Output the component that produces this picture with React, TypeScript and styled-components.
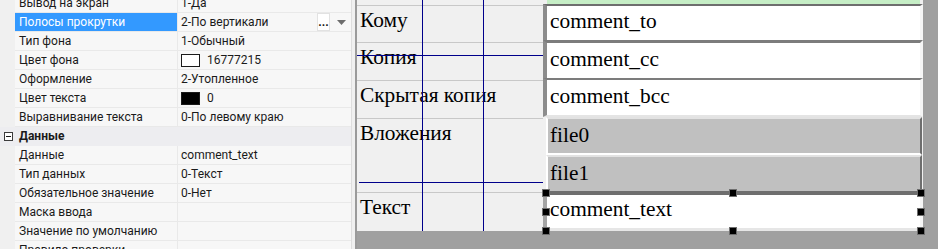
import React from "react";
import styled, { createGlobalStyle } from "styled-components";

type PropItem = {
  name: string;
  value?: string;
  swatch?: string;
  selected?: boolean;
  category?: boolean;
};

type FieldKind = "edit" | "list" | "active";

type FieldItem = {
  text: string;
  kind: FieldKind;
  top: string;
  bottom?: string;
  height: number;
  pad: number;
};

const properties: PropItem[] = [
  { name: "Вывод на экран", value: "1-Да" },
  { name: "Полосы прокрутки", value: "2-По вертикали", selected: true },
  { name: "Тип фона", value: "1-Обычный" },
  { name: "Цвет фона", value: "16777215", swatch: "#ffffff" },
  { name: "Оформление", value: "2-Утопленное" },
  { name: "Цвет текста", value: "0", swatch: "#000000" },
  { name: "Выравнивание текста", value: "0-По левому краю" },
  { name: "Данные", category: true },
  { name: "Данные", value: "comment_text" },
  { name: "Тип данных", value: "0-Текст" },
  { name: "Обязательное значение", value: "0-Нет" },
  { name: "Маска ввода" },
  { name: "Значение по умолчанию" },
  { name: "Правило проверки" },
];

const labels = ["", "Кому", "Копия", "Скрытая копия", "Вложения", "Текст"];

const fields: FieldItem[] = [
  { text: "comment_to", kind: "edit", top: "2px solid #6e6e6e", height: 36, pad: 3 },
  { text: "comment_cc", kind: "edit", top: "3px solid #7c7c7c", height: 38, pad: 4 },
  {
    text: "comment_bcc",
    kind: "edit",
    top: "2px solid #7c7c7c",
    bottom: "2px solid #e4e4e4",
    height: 39,
    pad: 4,
  },
  {
    text: "file0",
    kind: "list",
    top: "2px solid #e2e2e2",
    bottom: "2px solid #ffffff",
    height: 38,
    pad: 4,
  },
  { text: "file1", kind: "list", top: "2px solid #e2e2e2", height: 36, pad: 4 },
  {
    text: "comment_text",
    kind: "active",
    top: "4px solid #6e6e6e",
    bottom: "3px solid #e6e6e6",
    height: 40,
    pad: 2,
  },
];

const handles = [
  { x: 185, y: 189 },
  { x: 185, y: 208 },
  { x: 185, y: 227 },
  { x: 372, y: 189 },
  { x: 372, y: 227 },
  { x: 560, y: 189 },
  { x: 560, y: 208 },
  { x: 560, y: 227 },
];

export default function App() {
  return (
    <>
      <GlobalStyle />
      <Screen>
        <PropertyPane>
          <PropGrid>
            {properties.map((p, i) => (
              <PropRow key={i} $category={p.category}>
                <Gutter $category={p.category}>
                  {p.category && <CollapseBox />}
                </Gutter>
                <NameCell $selected={p.selected} $category={p.category}>
                  {p.name}
                </NameCell>
                <ValueCell $category={p.category}>
                  {p.swatch && <Swatch $color={p.swatch} />}
                  {p.value}
                  {p.selected && (
                    <EditorButtons>
                      <EllipsisButton>...</EllipsisButton>
                      <DropButton>
                        <svg width="9" height="5" viewBox="0 0 9 5">
                          <path d="M0 0h9L4.5 5z" fill="#6d6d6d" />
                        </svg>
                      </DropButton>
                    </EditorButtons>
                  )}
                </ValueCell>
              </PropRow>
            ))}
          </PropGrid>
        </PropertyPane>
        <Splitter />
        <Designer>
          <Canvas>
            <LabelColumn>
              {labels.map((l, i) => (
                <LabelCell key={i} $first={i === 0}>
                  {l}
                </LabelCell>
              ))}
            </LabelColumn>
            <FieldColumn>
              <GreenStrip />
              {fields.map((f) => (
                <Field
                  key={f.text}
                  $kind={f.kind}
                  $top={f.top}
                  $bottom={f.bottom}
                  $height={f.height}
                  $pad={f.pad}
                >
                  {f.text}
                </Field>
              ))}
            </FieldColumn>
            <GuideV $x={65} />
            <GuideV $x={126} />
            <GuideH $y={55} $from={0} />
            <GuideH $y={182} $from={2} />
            {handles.map((h, i) => (
              <Handle key={i} $x={h.x} $y={h.y} />
            ))}
          </Canvas>
        </Designer>
      </Screen>
    </>
  );
}

const GlobalStyle = createGlobalStyle`
  html, body {
    margin: 0;
    padding: 0;
    overflow: hidden;
    background: #a0a0a0;
  }
`;

const Screen = styled.div`
  display: flex;
  width: 938px;
  height: 249px;
  overflow: hidden;
`;

const PropertyPane = styled.div`
  box-sizing: border-box;
  width: 352px;
  height: 249px;
  overflow: hidden;
  background: #f7f7f7;
  border-right: 1px solid #dedede;
  font-family: Roboto, "Liberation Sans", sans-serif;
  font-size: 12px;
  color: #1a1a1a;
`;

const PropGrid = styled.div`
  margin-top: -6px;
`;

const PropRow = styled.div<{ $category?: boolean }>`
  display: grid;
  grid-template-columns: 15px 163px 1fr;
  height: 19px;
  background: ${(p) => (p.$category ? "#ededf0" : "#f7f7f7")};
`;

const Gutter = styled.div<{ $category?: boolean }>`
  display: flex;
  align-items: center;
  justify-content: center;
  background: ${(p) => (p.$category ? "#ededf0" : "#f0f0f0")};
`;

const CollapseBox = styled.div`
  position: relative;
  box-sizing: border-box;
  width: 9px;
  height: 9px;
  margin-left: 2px;
  border: 1px solid #3c3c3c;
  background: #fff;

  &::after {
    content: "";
    position: absolute;
    left: 1px;
    right: 1px;
    top: 3px;
    height: 1px;
    background: #1a1a1a;
  }
`;

const NameCell = styled.div<{ $selected?: boolean; $category?: boolean }>`
  box-sizing: border-box;
  padding-left: 4px;
  line-height: 18px;
  white-space: nowrap;
  overflow: hidden;
  border-bottom: 1px solid ${(p) => (p.$category ? "#ededf0" : "#e9e9e9")};
  border-right: 1px solid ${(p) => (p.$category ? "#ededf0" : "#e9e9e9")};
  background: ${(p) => (p.$selected ? "#3399ff" : "transparent")};
  background-clip: padding-box;
  color: ${(p) => (p.$selected ? "#ffffff" : "#1a1a1a")};
  font-weight: ${(p) => (p.$category ? 700 : 400)};
`;

const ValueCell = styled.div<{ $category?: boolean }>`
  box-sizing: border-box;
  display: flex;
  align-items: center;
  gap: 7px;
  padding: 0 5px 0 3px;
  height: 19px;
  white-space: nowrap;
  border-bottom: 1px solid ${(p) => (p.$category ? "#ededf0" : "#e9e9e9")};
`;

const Swatch = styled.div<{ $color: string }>`
  box-sizing: border-box;
  width: 19px;
  height: 13px;
  border: 1px solid #1a1a1a;
  background: ${(p) => p.$color};
`;

const EditorButtons = styled.div`
  display: flex;
  margin-left: auto;
  height: 18px;
`;

const EllipsisButton = styled.div`
  box-sizing: border-box;
  width: 13px;
  border: 1px solid #e2e2e2;
  background: #ffffff;
  font-weight: 700;
  font-size: 12px;
  line-height: 17px;
  text-align: center;
  overflow: hidden;
`;

const DropButton = styled.div`
  display: flex;
  align-items: center;
  justify-content: flex-end;
  width: 16px;
  background: #f7f7f7;
`;

const Splitter = styled.div`
  width: 3px;
  height: 249px;
  background: #f0f0f0;
`;

const Designer = styled.div`
  flex: 1;
  height: 249px;
  background: #a0a0a0;
  border-left: 2px solid #9a9a9a;
`;

const Canvas = styled.div`
  position: relative;
  display: grid;
  grid-template-columns: 186px 380px;
  width: 566px;
  height: 231px;
  background: #f0f0f0;
  font-family: "Liberation Serif", "Times New Roman", serif;
  font-size: 21.33px;
  line-height: 24px;
  color: #000;
`;

const LabelColumn = styled.div`
  display: grid;
  grid-template-rows: 5px 37px 38px 38px 74px 39px;
`;

const LabelCell = styled.div<{ $first?: boolean }>`
  box-sizing: border-box;
  padding: 2px 0 0 3px;
  border-top: ${(p) => (p.$first ? "none" : "1px solid #c8c8c8")};
  white-space: nowrap;
`;

const FieldColumn = styled.div`
  display: flex;
  flex-direction: column;
`;

const GreenStrip = styled.div`
  height: 4px;
  margin: 0 3px 0 4px;
  background: #c6eec6;
`;

const fieldLook: Record<FieldKind, string> = {
  edit: `
    background: #ffffff;
    border-left: 4px solid #8c8c8c;
    border-right: 3px solid #f6f6f6;
  `,
  list: `
    margin-left: 3px;
    margin-right: 1px;
    background: #c0c0c0;
    border-left: 2px solid #ffffff;
    border-right: 2px solid #6e6e6e;
  `,
  active: `
    background: #ffffff;
    border-left: 4px solid #a4a4a4;
    border-right: 3px solid #f6f6f6;
  `,
};

const Field = styled.div<{
  $kind: FieldKind;
  $top: string;
  $bottom?: string;
  $height: number;
  $pad: number;
}>`
  box-sizing: border-box;
  height: ${(p) => p.$height}px;
  padding: ${(p) => p.$pad}px 0 0 ${(p) => (p.$kind === "list" ? 2 : 3)}px;
  border-top: ${(p) => p.$top};
  border-bottom: ${(p) => p.$bottom ?? "none"};
  white-space: nowrap;
  ${(p) => fieldLook[p.$kind]}
`;

const GuideV = styled.div<{ $x: number }>`
  position: absolute;
  top: 0;
  bottom: 0;
  left: ${(p) => p.$x}px;
  width: 1px;
  background: #00008b;
`;

const GuideH = styled.div<{ $y: number; $from: number }>`
  position: absolute;
  top: ${(p) => p.$y}px;
  left: ${(p) => p.$from}px;
  width: ${(p) => 186 - p.$from}px;
  height: 1px;
  background: #00008b;
`;

const Handle = styled.div<{ $x: number; $y: number }>`
  position: absolute;
  left: ${(p) => p.$x}px;
  top: ${(p) => p.$y}px;
  box-sizing: border-box;
  width: 8px;
  height: 8px;
  background: #000;
  border: 1px solid #6e6e6e;
`;
